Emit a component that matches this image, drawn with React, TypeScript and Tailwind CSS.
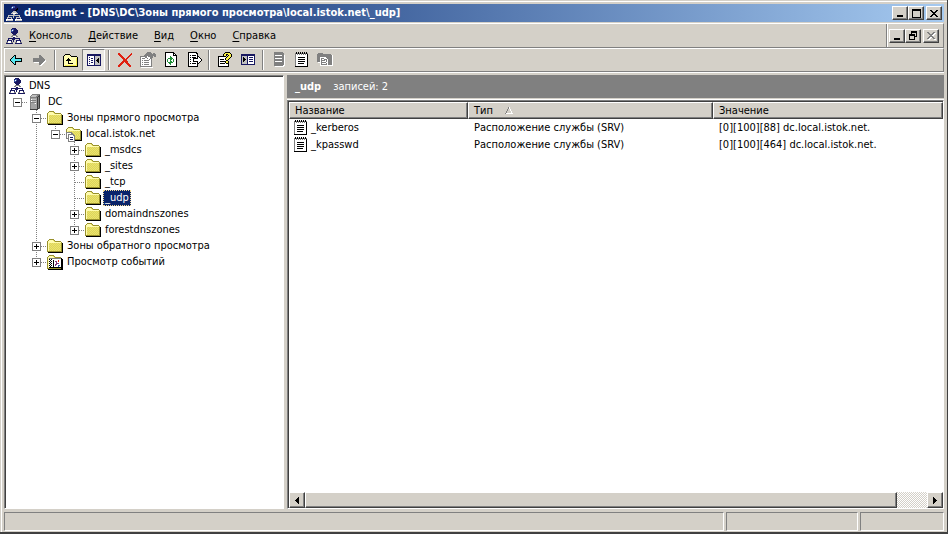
import { useState } from 'react';
import type { ReactNode } from 'react';

// one character = one pixel
const palette: Record<string, string> = {
  k: '#000000',
  w: '#ffffff',
  g: '#808080',
  l: '#c0c0c0',
  d: '#404040',
  n: '#181860',
  b: '#3858a8',
  c: '#58e8f0',
  y: '#f8f048',
  p: '#fffcb0',
  f: '#ece46c',
  o: '#dcd45c',
  a: '#98902c',
  r: '#e02010',
  e: '#209038',
  m: '#803878',
  h: '#a4a4a4',
};

const sprites: Record<string, string[]> = {
  dns: [
    '......nnnn......',
    '.....nbbnnn.....',
    '.....bwbnnnn....',
    '.....bbnnnnn....',
    '.....nnnnnnn....',
    '......nnnnn.....',
    '.......nnn......',
    '......ggggg.....',
    '.....ggwwwgg....',
    '.......nn.......',
    '..nnnnnnnnnnnn..',
    '..n...nnn....n..',
    '.nnnnn.n..nnnnn.',
    '.nwwwn.n..nwwwn.',
    'ggwwwgg..ggwwwgg',
    'nnnnnnn..nnnnnnn',
  ],
  dnsTitle: [
    '......nnnn......',
    '.....nbbbnn.....',
    '.....bwbbnnn....',
    '.....bbnnnnk....',
    '.....nnnnnkk....',
    '......nnnkk.....',
    '.......lll......',
    '......lllll.....',
    '.....llwwwll....',
    '.......ll.......',
    '..llllllllllll..',
    '..l....l.....l..',
    '.lllll.l..lllll.',
    '.lnnnl....lnnnl.',
    'wwwwwww..wwwwwww',
    'wllllll..wllllll',
  ],
  server: [
    '....gggggggg....',
    '...glllllggd....',
    '..glllllggdd....',
    '..gggggggdgd....',
    '..ghhhhhhdgd....',
    '..gwllllhdgd....',
    '..gggggghdgd....',
    '..gwllllhdgd....',
    '..gggggghdgd....',
    '..ghhhlwhdgd....',
    '..ghhhhhhdgd....',
    '..ghhhhhhdgd....',
    '..ghhhhhhdgd....',
    '..ghhhhhhdgd....',
    '..ghhhhhhddg....',
    '..dddddddd......',
  ],
  folder: [
    '................',
    '..aaaaa.........',
    '.appppoa........',
    'appppppoaaaaaa..',
    'apppppppppppppa.',
    'apfofofofofofoak',
    'apofofofofofofak',
    'apfofofofofofoak',
    'apofofofofofofak',
    'apfofofofofofoak',
    'apofofofofofofak',
    'apfofofofofofoak',
    'apofofofofofofak',
    'aaaaaaaaaaaaaaak',
    '.kkkkkkkkkkkkkkk',
    '................',
  ],
  zone: [
    '................',
    '..aaaaa.........',
    '.appppoa........',
    'appppppoaaaaaa..',
    'apppppppppppppa.',
    'apfofofofofofoak',
    'ggggggofofofofak',
    'gwwwwggofofofoak',
    'gwggggggofofofak',
    'gwgwwwwggfofofak',
    'gwgwwwwwgofofoak',
    'gwgwnnnwgfofofak',
    'gggwwwwwgofofoak',
    '..gwnnnwgaaaaaak',
    '..gwwwwwgkkkkkkk',
    '..ggggggg.......',
  ],
  events: [
    '................',
    '..aaaaa.........',
    '.appppoa........',
    'appppppoaaaaaa..',
    'apggggggggggggk.',
    'apkwkwwwwwwwwwkk',
    'apwkwwkwwwwrwwkk',
    'apkwkwkwmmwrwwkk',
    'apwkwwkwwmwwwwkk',
    'apkwkwkwwmmmwwkk',
    'apwkwwkwmmwwwwkk',
    'apkwkwkwmwwbbwkk',
    'apwkwwkwwwwbwwkk',
    'apkkkkkkkkkkkkkk',
    'aaaaaaaaaaaaaakk',
    '.kkkkkkkkkkkkkkk',
  ],
  record: [
    '..k.k.k.k.k.k...',
    '.gkgkgkgkgkgkg..',
    '.gwgwgwgwgwgwk..',
    '.gwwwwwwwwwwwk..',
    '.gwwwwwwwwwwwk..',
    '.gwwkkkkkkkwwk..',
    '.gwwwwwwwwwwwk..',
    '.gwwkkkkkkkwwk..',
    '.gwwwwwwwwwwwk..',
    '.gwwkkkkkkkwwk..',
    '.gwwwwwwwwwwwk..',
    '.gwwkkkkkkwwwk..',
    '.gwwwwwwwwwwwk..',
    '.gwwwwwwwwwwwk..',
    '.kkkkkkkkkkkkk..',
    '................',
  ],
  back: [
    '................',
    '................',
    '................',
    '.....kk.........',
    '....kck.........',
    '...kcck.........',
    '..kccckkkkkkk...',
    '.kcccccccccck...',
    '.kcccccccccck...',
    '..kccckkkkkkk...',
    '...kcck.........',
    '....kck.........',
    '.....kk.........',
    '................',
    '................',
    '................',
  ],
  forward: [
    '................',
    '................',
    '................',
    '.......gg.......',
    '.......ggg......',
    '.......gggg.....',
    '.ggggggggggg....',
    '.gggggggggggg...',
    '.ggggggggggggw..',
    '.gggggggggggww..',
    '..wwwwwggggww...',
    '.......gggww....',
    '.......ggww.....',
    '........ww......',
    '................',
    '................',
  ],
  up: [
    '................',
    '................',
    '..kkkkk.........',
    '.kpppppk........',
    'kpppppppkkkkkk..',
    'kpppppppppppppk.',
    'kppppkpppppppyk.',
    'kpppkkkppppppyk.',
    'kppkkkkkpppppyk.',
    'kppppkpppppppyk.',
    'kppppkpppppppyk.',
    'kppppkkkkkpppyk.',
    'kppppppppppppyk.',
    'kpyyyyyyyyyyyyk.',
    'kkkkkkkkkkkkkkk.',
    '................',
  ],
  tree: [
    '................',
    '................',
    '.nnnnnnnnnnnnnn.',
    '.nnnnnnnnnnnnnn.',
    '.nwwwwwwnllllln.',
    '.nwnwwwwnllllln.',
    '.nwwwnnwnlllkln.',
    '.nwnwwwwnllkkln.',
    '.nwwwnnwnlkkkln.',
    '.nwnwwwwnllkkln.',
    '.nwwwnnwnlllkln.',
    '.nwnwwwwnllllln.',
    '.nwwwwwwnllllln.',
    '.nnnnnnnnnnnnnn.',
    '................',
    '................',
  ],
  remove: [
    '................',
    '.rr...........r.',
    '.rrr.........rr.',
    '..rrr.......rr..',
    '...rrr.....rr...',
    '....rrr...rr....',
    '.....rrr.rr.....',
    '......rrrr......',
    '......rrrr......',
    '.....rrrrrr.....',
    '....rrr.rrr.....',
    '...rrr...rrr....',
    '..rrr.....rrr...',
    '.rrr.......rrr..',
    '.rr.........rr..',
    '................',
  ],
  properties: [
    '.......gggg.....',
    '......gggggg.gg.',
    '.....ggggggggggg',
    '....gggggggggggg',
    'gggggggwggggg.gg',
    'gwwwwggwwwggg...',
    'gwgggwwgwwgg....',
    'gwwwwwwwwgwg....',
    'gwgwgggggwwg....',
    'gwwwwwwwwwwg....',
    'gwgwgggggwwg....',
    'gwwwwwwwwwwg....',
    'gwgwgggggwwg....',
    'gwwwwwwwwwwg....',
    'gggggggggggg....',
    '.wwwwwwwwwwww...',
  ],
  refresh: [
    '..kkkkkkkkk.....',
    '..kwwwwwwwkk....',
    '..kwwwwwwwkwk...',
    '..kwwwwwwwkkkk..',
    '..kwwwwewwwwwk..',
    '..kwwwweewwwwk..',
    '..kwweeeeewwwk..',
    '..kwewweewewwk..',
    '..kwewwewwewwk..',
    '..kwewweewewwk..',
    '..kwweeeeewwwk..',
    '..kwwweewwwwwk..',
    '..kwwwwewwwwwk..',
    '..kwwwwwwwwwwk..',
    '..kkkkkkkkkkkk..',
    '................',
  ],
  exportList: [
    '..kkkkkkkkk.....',
    '..kwwwwwwwkk....',
    '..kwwwwwwwwk....',
    '..kwkwkkkkwk....',
    '..kwwwwwwwwkk...',
    '..kwkwkkkkwkwk..',
    '..kwwwwkkkkkwwk.',
    '..kwkwwkwwwwwwwk',
    '..kwwwwkwwwwwwwk',
    '..kwkwwkkkkkwwk.',
    '..kwwwwwwwwkwk..',
    '..kwkwkkkkwkk...',
    '..kwwwwwwwwk....',
    '..kwwwwwwwwk....',
    '..kkkkkkkkkk....',
    '................',
  ],
  help: [
    '........kkkkk...',
    '.......kyyyyyk..',
    '......kyykkyyyk.',
    '......kyyk.kyyk.',
    '.kkkkkkkk.kyyyk.',
    '.kwwwwwwwkyyyk..',
    '.kwwwwwwkyyyk...',
    '.kwkkkkwkyyk....',
    '.kwwwwwwwkk.....',
    '.kwkkkkkkyyk....',
    '.kwwwwwwkyyk....',
    '.kwkkkkkwkkk....',
    '.kwwwwwwwwwk....',
    '.kwwwwwwwwwk....',
    '.kkkkkkkkkkk....',
    '................',
  ],
  showPane: [
    '................',
    '................',
    '.nnnnnnnnnnnnnn.',
    '.nnnnnnnnnnnnnn.',
    '.nlllllnwwwwwwn.',
    '.nlklllnwnnnnwn.',
    '.nlkkllnwwwwwwn.',
    '.nlkkklnwnnnnwn.',
    '.nlkkllnwwwwwwn.',
    '.nlklllnwnnnnwn.',
    '.nlllllnwwwwwwn.',
    '.nlllllnwwwwwwn.',
    '.nnnnnnnnnnnnnn.',
    '................',
    '................',
    '................',
  ],
  serverOff: [
    '...ggggggggg....',
    '...gggggggggg...',
    '...gggggggggg...',
    '...gwwwwwwwggw..',
    '...ggggggggggw..',
    '...ggggggggggw..',
    '...gwwwwwwwggw..',
    '...ggggggggggw..',
    '...ggggggggggw..',
    '...gwwwwwwwggw..',
    '...ggggggggggw..',
    '...ggggggggggw..',
    '...ggggggggggw..',
    '...gggggggggww..',
    '....wwwwwwwww...',
    '................',
  ],
  folderOff: [
    '................',
    '.ggggg..........',
    'gggggggggggggg..',
    'gggggggggggggggw',
    'gggggggggggggggw',
    'gggwwwwwwggggggw',
    'gggwgggwwwgggggw',
    'gggwgwwgggwggggw',
    'gggwggggwgwggggw',
    'gggwgwwwwgwggggw',
    '.wwwgggggwwggggw',
    '...wgwwwwgwggggw',
    '...wggggggwggggw',
    '...wwwwwwwwwwwww',
    '................',
    '................',
  ],
  minimize: [
    '........',
    '........',
    '........',
    '........',
    '........',
    '........',
    '.kkkkkk.',
    '.kkkkkk.',
  ],
  maximize: [
    'kkkkkkkkk',
    'kkkkkkkkk',
    'k.......k',
    'k.......k',
    'k.......k',
    'k.......k',
    'k.......k',
    'k.......k',
    'kkkkkkkkk',
  ],
  restore: [
    '..kkkkkk',
    '..kkkkkk',
    '..k....k',
    'kkkkkk.k',
    'kkkkkk.k',
    'k....kkk',
    'k....k..',
    'k....k..',
    'kkkkkk..',
  ],
  close: [
    'kk....kk',
    '.kk..kk.',
    '..kkkk..',
    '...kk...',
    '..kkkk..',
    '.kk..kk.',
    'kk....kk',
  ],
  closeOff: [
    'gg....gg.',
    '.gg..ggww',
    '..ggggww.',
    '...ggww..',
    '..gggg...',
    '.ggwwgg..',
    'ggww..gg.',
    '.ww....ww',
  ],
  arrowLeft: ['...k', '..kk', '.kkk', 'kkkk', '.kkk', '..kk', '...k'],
  arrowRight: ['k...', 'kk..', 'kkk.', 'kkkk', 'kkk.', 'kk..', 'k...'],
  sortUp: [
    '...gw...',
    '...gw...',
    '..g..w..',
    '..g..w..',
    '.g....w.',
    '.g....w.',
    'gwwwwwww',
  ],
};

function Sprite({ name }: { name: string }) {
  const rows = sprites[name];
  const w = rows[0].length;
  return (
    <svg className="shrink-0" width={w} height={rows.length} viewBox={`0 0 ${w} ${rows.length}`} shapeRendering="crispEdges" aria-hidden="true">
      {rows.flatMap((row, y) =>
        row.split('').map((ch, x) =>
          palette[ch] ? <rect key={`${x}-${y}`} x={x} y={y} width={1} height={1} fill={palette[ch]} /> : null,
        ),
      )}
    </svg>
  );
}

const raised = 'border border-t-white border-l-white border-r-[#404040] border-b-[#404040] bg-[#d4d0c8] shadow-[inset_-1px_-1px_0_#808080]';
const sunken = 'border border-t-[#808080] border-l-[#808080] border-r-white border-b-white';

interface TreeItem {
  label: string;
  icon: string;
  children?: TreeItem[];
  expanded?: boolean;
}

const dnsTree: TreeItem = {
  label: 'DC',
  icon: 'server',
  expanded: true,
  children: [
    {
      label: 'Зоны прямого просмотра',
      icon: 'folder',
      expanded: true,
      children: [
        {
          label: 'local.istok.net',
          icon: 'zone',
          expanded: true,
          children: [
            { label: '_msdcs', icon: 'folder', children: [] },
            { label: '_sites', icon: 'folder', children: [] },
            { label: '_tcp', icon: 'folder' },
            { label: '_udp', icon: 'folder' },
            { label: 'domaindnszones', icon: 'folder', children: [] },
            { label: 'forestdnszones', icon: 'folder', children: [] },
          ],
        },
      ],
    },
    { label: 'Зоны обратного просмотра', icon: 'folder', children: [] },
    { label: 'Просмотр событий', icon: 'events', children: [] },
  ],
};

function Guide({ vertical, half, branch }: { vertical?: boolean; half?: boolean; branch?: boolean }) {
  return (
    <svg className="shrink-0" width={19} height={16} viewBox="0 0 19 16" stroke="#808080" strokeDasharray="1 1" shapeRendering="crispEdges" aria-hidden="true">
      {vertical && <path d={half ? 'M9.5 0V8' : 'M9.5 0V16'} />}
      {branch && <path d="M10 8.5H19" />}
    </svg>
  );
}

interface NodeProps {
  item: TreeItem;
  guides: boolean[];
  last: boolean;
  selected: string;
  onSelect: (label: string) => void;
}

function TreeNode({ item, guides, last, selected, onSelect }: NodeProps) {
  const [open, setOpen] = useState(!!item.expanded);
  const isSelected = selected === item.label;

  return (
    <li>
      <div className="flex h-4 items-center">
        {guides.map((g, i) => <Guide key={i} vertical={g} />)}
        <span className="relative flex">
          <Guide vertical={guides.length > 0} half={last} branch />
          {item.children && (
            <button
              type="button"
              aria-label={`${open ? 'Свернуть' : 'Развернуть'} ${item.label}`}
              onClick={() => setOpen(!open)}
              className="absolute top-1 left-[5px] size-[9px] border border-[#808080] bg-white"
            >
              <svg width={7} height={7} viewBox="0 0 7 7" shapeRendering="crispEdges">
                <path d={open ? 'M1 3h5v1H1z' : 'M1 3h5v1H1zM3 1h1v5H3z'} />
              </svg>
            </button>
          )}
        </span>
        <span className="flex w-[19px] pl-px"><Sprite name={item.icon} /></span>
        <button
          type="button"
          onClick={() => onSelect(item.label)}
          className={`h-4 px-[2px] leading-4 whitespace-nowrap ${isSelected ? 'bg-[#0a246a] text-white outline-1 -outline-offset-1 outline-dotted outline-[#f5db95]' : ''}`}
        >
          {item.label}
        </button>
      </div>
      {open && item.children && (
        <ul>
          {item.children.map((child, i) => (
            <TreeNode
              key={child.label}
              item={child}
              guides={[...guides, !last]}
              last={i === item.children!.length - 1}
              selected={selected}
              onSelect={onSelect}
            />
          ))}
        </ul>
      )}
    </li>
  );
}

function CaptionButton({ icon, label, disabled }: { icon: string; label: string; disabled?: boolean }) {
  return (
    <button type="button" aria-label={label} disabled={disabled} className={`flex h-[14px] w-4 items-center justify-center ${raised}`}>
      <Sprite name={icon} />
    </button>
  );
}

function ToolButton({ icon, label, pressed, disabled }: { icon: string; label: string; pressed?: boolean; disabled?: boolean }) {
  return (
    <button
      type="button"
      aria-label={label}
      aria-pressed={pressed}
      disabled={disabled}
      className={`flex h-[22px] w-[23px] items-center justify-center ${pressed ? `bg-[#ebe9e4] ${sunken}` : ''}`}
    >
      <Sprite name={icon} />
    </button>
  );
}

function Separator() {
  return <span className="mx-[3px] h-5 w-[2px] border-l border-l-[#808080] bg-white" />;
}

function Pane({ children, className }: { children: ReactNode; className: string }) {
  return (
    <div className={`border border-t-[#808080] border-l-[#808080] border-r-white border-b-white ${className}`}>
      <div className="flex min-h-0 min-w-0 flex-1 flex-col border-t border-l border-[#404040] bg-white">{children}</div>
    </div>
  );
}

const menus = ['Консоль', 'Действие', 'Вид', 'Окно', 'Справка'];

const records = [
  { name: '_kerberos', type: 'Расположение службы (SRV)', value: '[0][100][88] dc.local.istok.net.' },
  { name: '_kpasswd', type: 'Расположение службы (SRV)', value: '[0][100][464] dc.local.istok.net.' },
];

export default function App() {
  const [selected, setSelected] = useState('_udp');

  return (
    <div className="flex min-h-screen flex-col border-r border-b-2 border-[#404040] bg-[#d4d0c8] pt-1 pr-[3px] pb-px pl-1 font-['Tahoma','DejaVu_Sans_Condensed','DejaVu_Sans',sans-serif] text-[11px] leading-4 text-black shadow-[inset_1px_1px_0_#d4d0c8,inset_2px_2px_0_#ffffff]">
      {/* Title bar */}
      <header className="flex h-[18px] items-center bg-linear-to-r from-[#0a246a] to-[#a6caf0] pr-[2px] pl-[2px]">
        <Sprite name="dnsTitle" />
        <h1 className="ml-[2px] flex-1 truncate font-bold text-white">dnsmgmt - [DNS\DC\Зоны прямого просмотра\local.istok.net\_udp]</h1>
        <CaptionButton icon="minimize" label="Свернуть" />
        <CaptionButton icon="maximize" label="Развернуть" />
        <span className="ml-[2px] flex"><CaptionButton icon="close" label="Закрыть" /></span>
      </header>

      {/* Menu bar */}
      <nav className="mt-px flex h-[25px] items-center border-t border-r border-b border-t-white border-r-[#808080] border-b-[#808080] pl-[2px]">
        <Sprite name="dns" />
        <div className="flex flex-1">
          {menus.map(m => (
            <button key={m} type="button" className="px-2 first:pl-[7px]"><span className="underline underline-offset-2">{m[0]}</span>{m.slice(1)}</button>
          ))}
        </div>
        <div className="flex h-full items-center border-l border-[#808080] pr-1 pl-[2px] shadow-[inset_1px_0_0_#ffffff]">
          <CaptionButton icon="minimize" label="Свернуть окно" />
          <CaptionButton icon="restore" label="Восстановить окно" />
          <span className="ml-[2px] flex"><CaptionButton icon="closeOff" label="Закрыть окно" disabled /></span>
        </div>
      </nav>

      {/* Toolbar */}
      <div role="toolbar" aria-label="Панель инструментов" className="flex h-6 items-center border border-t-white border-r-[#808080] border-b-[#808080] border-l-white">
        <ToolButton icon="back" label="Назад" />
        <ToolButton icon="forward" label="Вперед" disabled />
        <Separator />
        <ToolButton icon="up" label="На один уровень вверх" />
        <ToolButton icon="tree" label="Дерево консоли" pressed />
        <Separator />
        <ToolButton icon="remove" label="Удалить" />
        <ToolButton icon="properties" label="Свойства" disabled />
        <ToolButton icon="refresh" label="Обновить" />
        <ToolButton icon="exportList" label="Экспортировать список" />
        <Separator />
        <ToolButton icon="help" label="Справка" />
        <ToolButton icon="showPane" label="Панель действий" />
        <Separator />
        <ToolButton icon="serverOff" label="Новый сервер" disabled />
        <ToolButton icon="record" label="Новая запись" />
        <ToolButton icon="folderOff" label="Новая зона" disabled />
      </div>

      <main className="flex flex-1 gap-[3px] border-t border-white pt-[2px]">
        {/* Console tree */}
        <Pane className="flex w-[280px] shrink-0">
          <div className="pt-px pl-[2px]">
            <button type="button" onClick={() => setSelected('DNS')} className="flex h-4 items-center gap-1 pl-px">
              <Sprite name="dns" />
              <span>DNS</span>
            </button>
            <ul>
              <TreeNode item={dnsTree} guides={[]} last selected={selected} onSelect={setSelected} />
            </ul>
          </div>
        </Pane>

        {/* Record list */}
        <section className="flex min-w-0 flex-1 flex-col">
          <div className="flex h-[23px] items-center gap-3 bg-[#808080] px-2 text-white">
            <h2 className="font-bold">_udp</h2>
            <span>записей: 2</span>
          </div>
          <div className="mt-px flex min-h-0 flex-1 flex-col border-t border-white">
            <Pane className="flex flex-1">
              <div className="flex-1">
                <table className="w-full table-fixed border-separate border-spacing-0 text-left">
                  <colgroup>
                    <col className="w-[179px]" />
                    <col className="w-[245px]" />
                    <col />
                  </colgroup>
                  <thead>
                    <tr className="h-[17px]">
                      {['Название', 'Тип', 'Значение'].map(title => (
                        <th key={title} className={`h-[17px] px-[5px] py-0 leading-[15px] font-normal ${raised}`}>
                          <span className="flex items-center gap-3">{title}{title === 'Тип' && <Sprite name="sortUp" />}</span>
                        </th>
                      ))}
                    </tr>
                  </thead>
                  <tbody>
                    {records.map(r => (
                      <tr key={r.name}>
                        <td className="h-[17px] px-1 py-0">
                          <span className="flex items-center gap-[2px]"><Sprite name="record" />{r.name}</span>
                        </td>
                        <td className="px-[6px] py-0">{r.type}</td>
                        <td className="px-[6px] py-0">{r.value}</td>
                      </tr>
                    ))}
                  </tbody>
                </table>
              </div>

              {/* Horizontal scroll bar */}
              <div className="flex h-4 bg-[repeating-conic-gradient(#ffffff_0_25%,#d4d0c8_0_50%)] bg-size-[2px_2px]">
                <button type="button" aria-label="Прокрутить влево" className={`flex w-4 items-center justify-center ${raised}`}><Sprite name="arrowLeft" /></button>
                <div className="flex-1 pr-[30px]"><div className={`h-4 ${raised}`} /></div>
                <button type="button" aria-label="Прокрутить вправо" className={`flex w-4 items-center justify-center ${raised}`}><Sprite name="arrowRight" /></button>
              </div>
            </Pane>
          </div>
        </section>
      </main>

      {/* Status bar */}
      <footer className="mt-[3px] flex h-[19px] gap-[2px]">
        <div className={`flex-1 ${sunken}`} />
        <div className={`w-[132px] ${sunken}`} />
        <div className={`w-[84px] ${sunken}`} />
      </footer>
    </div>
  );
}
